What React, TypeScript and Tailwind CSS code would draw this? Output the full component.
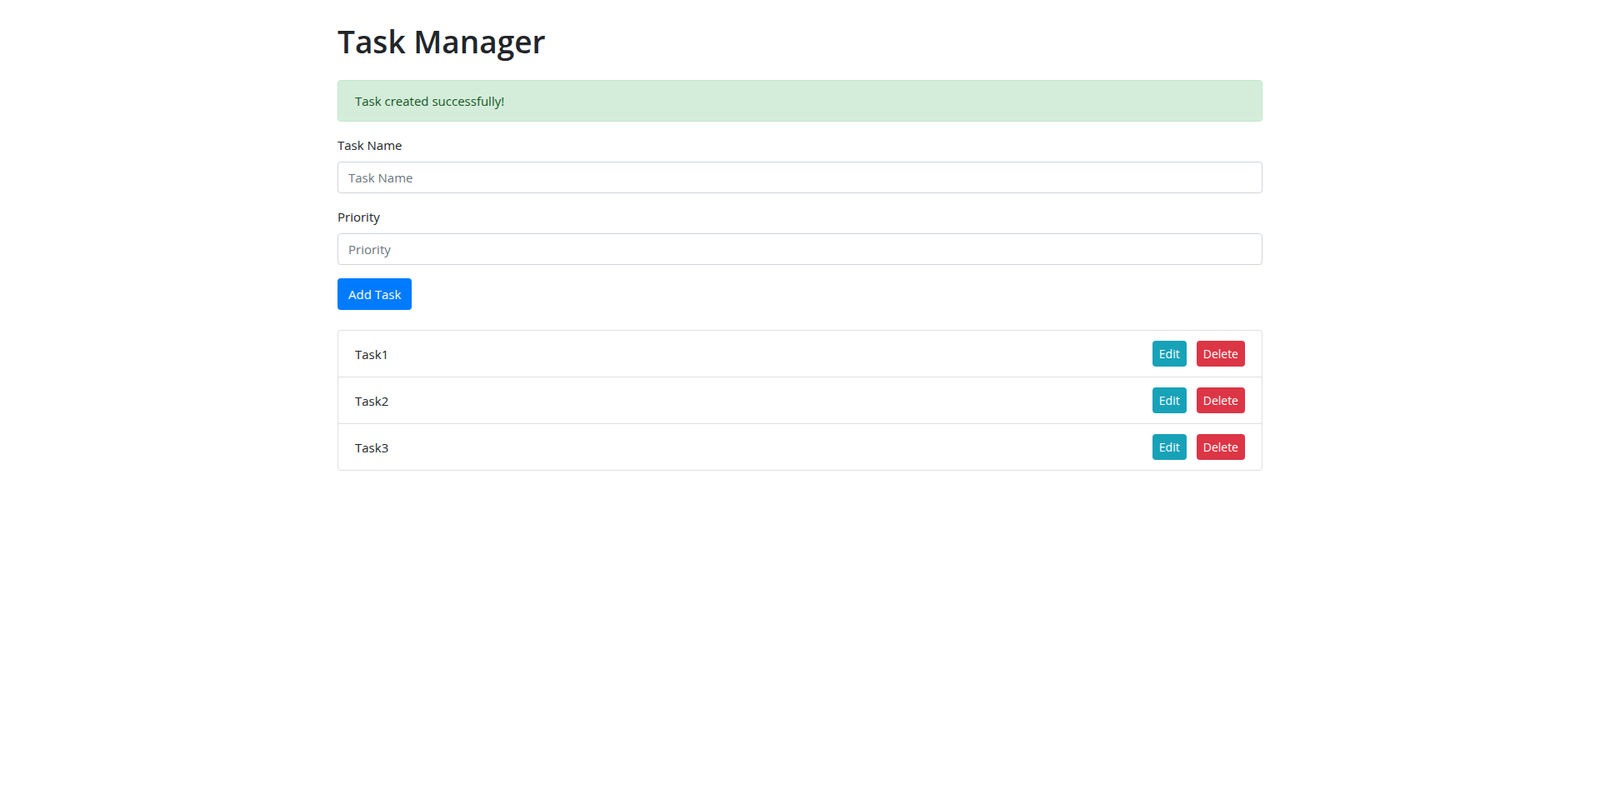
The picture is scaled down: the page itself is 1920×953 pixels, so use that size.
import { useState } from "react";

interface Task {
    id: number;
    name: string;
}

const initialTasks: Task[] = [
    { id: 1, name: "Task1" },
    { id: 2, name: "Task2" },
    { id: 3, name: "Task3" }
];

const App = () => {
    const [tasks, setTasks] = useState<Task[]>(initialTasks);
    const [name, setName] = useState("");
    const [priority, setPriority] = useState("");

    const addTask = () => {
        if (!name.trim()) return;
        setTasks([...tasks, { id: Date.now(), name }]);
        setName("");
        setPriority("");
    };

    const deleteTask = (id: number) => {
        setTasks(tasks.filter(t => t.id !== id));
    };

    return (
        <div className="min-h-screen bg-white text-[#212529] font-['Open_Sans',sans-serif] text-base leading-6">
            <div className="mx-auto w-full max-w-[1140px] px-[15px] pt-6">
                <h1 className="mb-5 text-[37px] font-semibold leading-[52px]">Task Manager</h1>

                {/* Alert */}
                <div className="mb-4 rounded border border-[#c3e6cb] bg-[#d4edda] px-5 py-3 text-[15px] text-[#155724]">
                    Task created successfully!
                </div>

                {/* Form */}
                <div className="mb-4">
                    <label className="mb-2 block text-[15px]">Task Name</label>
                    <input
                        value={name}
                        onChange={e => setName(e.target.value)}
                        placeholder="Task Name"
                        className="block h-[38px] w-full rounded border border-[#ced4da] px-3 text-[15px] text-[#495057] placeholder:text-[#6c757d] focus:outline-none"
                    />
                </div>
                <div className="mb-4">
                    <label className="mb-2 block text-[15px]">Priority</label>
                    <input
                        value={priority}
                        onChange={e => setPriority(e.target.value)}
                        placeholder="Priority"
                        className="block h-[38px] w-full rounded border border-[#ced4da] px-3 text-[15px] text-[#495057] placeholder:text-[#6c757d] focus:outline-none"
                    />
                </div>
                <button
                    onClick={addTask}
                    className="h-[38px] rounded bg-[#007bff] px-[13px] text-[15px] text-white"
                >
                    Add Task
                </button>

                {/* Task list */}
                <ul className="mt-6 rounded border border-[#dfdfdf]">
                    {tasks.map(task => (
                        <li
                            key={task.id}
                            className="flex items-center justify-between border-b border-[#dfdfdf] px-5 py-3 text-[15px] last:border-b-0"
                        >
                            <span>{task.name}</span>
                            <div className="flex gap-3">
                                <button className="h-[31px] rounded bg-[#17a2b8] px-2 text-[14px] text-white">
                                    Edit
                                </button>
                                <button
                                    onClick={() => deleteTask(task.id)}
                                    className="h-[31px] rounded bg-[#dc3545] px-2 text-[14px] text-white"
                                >
                                    Delete
                                </button>
                            </div>
                        </li>
                    ))}
                </ul>
            </div>
        </div>
    );
};

export default App;
